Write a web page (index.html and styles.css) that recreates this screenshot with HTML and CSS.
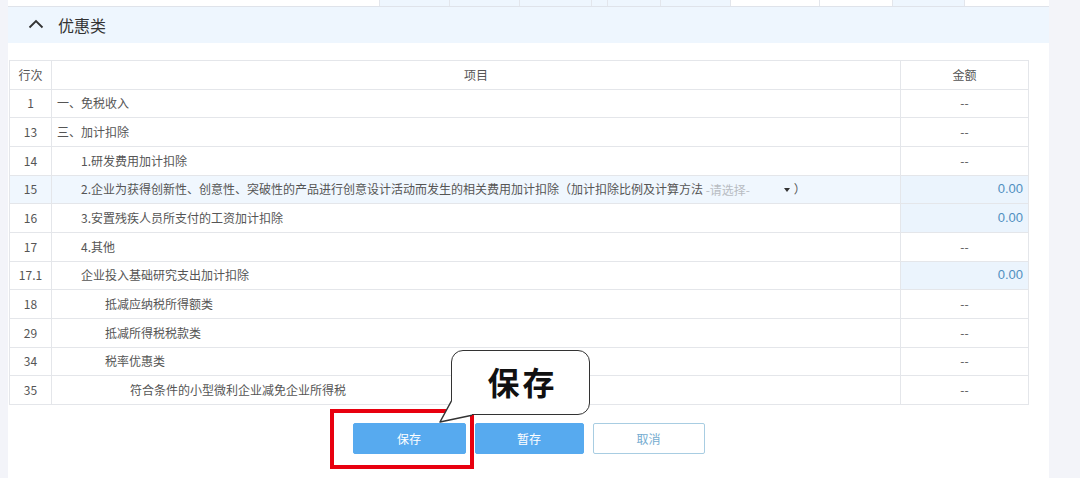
FILE: index.html
```html
<!DOCTYPE html>
<html lang="zh-CN">
<head>
    <meta charset="UTF-8">
    <meta name="viewport" content="width=device-width, initial-scale=1.0">
    <title>优惠类</title>
    <link rel="stylesheet" href="styles.css">
</head>
<body>
    <div class="panel">
        <div class="prev-row">
            <div class="cell" style="width: 89px"></div>
            <div class="cell" style="width: 283px"></div>
            <div class="cell tint" style="width: 70px"></div>
            <div class="cell tint" style="width: 70px"></div>
            <div class="cell tint" style="width: 72px"></div>
            <div class="cell tint" style="width: 16px"></div>
            <div class="cell tint" style="width: 53px"></div>
            <div class="cell tint" style="width: 70px"></div>
            <div class="cell" style="width: 89px"></div>
            <div class="cell" style="width: 73px"></div>
            <div class="cell tint" style="width: 72px"></div>
        </div>

        <div class="section-head">
            <svg class="chevron" width="16" height="10" viewBox="0 0 16 10">
                <polyline points="1.5,8.5 8,2 14.5,8.5" fill="none" stroke="#333" stroke-width="1.8"/>
            </svg>
            <span class="section-title">优惠类</span>
        </div>

        <table class="grid">
            <colgroup>
                <col class="col-no">
                <col class="col-item">
                <col class="col-amount">
            </colgroup>
            <thead>
                <tr>
                    <th>行次</th>
                    <th>项目</th>
                    <th>金额</th>
                </tr>
            </thead>
            <tbody>
                <tr>
                    <td class="no">1</td>
                    <td class="item lv0">一、免税收入</td>
                    <td class="amount">--</td>
                </tr>
                <tr>
                    <td class="no">13</td>
                    <td class="item lv0">三、加计扣除</td>
                    <td class="amount">--</td>
                </tr>
                <tr>
                    <td class="no">14</td>
                    <td class="item lv1">1.研发费用加计扣除</td>
                    <td class="amount">--</td>
                </tr>
                <tr class="picked">
                    <td class="no">15</td>
                    <td class="item lv1">2.企业为获得创新性、创意性、突破性的产品进行创意设计活动而发生的相关费用加计扣除<span class="paren">（</span>加计扣除比例及计算方法 <span class="pick"><span class="pick-text">-请选择-</span><span class="pick-caret"></span></span><span class="paren">）</span></td>
                    <td class="amount input">0.00</td>
                </tr>
                <tr>
                    <td class="no">16</td>
                    <td class="item lv1">3.安置残疾人员所支付的工资加计扣除</td>
                    <td class="amount input">0.00</td>
                </tr>
                <tr>
                    <td class="no">17</td>
                    <td class="item lv1">4.其他</td>
                    <td class="amount">--</td>
                </tr>
                <tr>
                    <td class="no">17.1</td>
                    <td class="item lv1">企业投入基础研究支出加计扣除</td>
                    <td class="amount input">0.00</td>
                </tr>
                <tr>
                    <td class="no">18</td>
                    <td class="item lv2">抵减应纳税所得额类</td>
                    <td class="amount">--</td>
                </tr>
                <tr>
                    <td class="no">29</td>
                    <td class="item lv2">抵减所得税税款类</td>
                    <td class="amount">--</td>
                </tr>
                <tr>
                    <td class="no">34</td>
                    <td class="item lv2">税率优惠类</td>
                    <td class="amount">--</td>
                </tr>
                <tr>
                    <td class="no">35</td>
                    <td class="item lv3">符合条件的小型微利企业减免企业所得税</td>
                    <td class="amount">--</td>
                </tr>
            </tbody>
        </table>

        <div class="actions">
            <button class="btn btn-save">保存</button>
            <button class="btn btn-draft">暂存</button>
            <button class="btn btn-cancel">取消</button>
        </div>

        <!-- annotation overlay -->
        <div class="mark-box"></div>
        <div class="callout">保存</div>
        <svg class="callout-tail" width="40" height="30" viewBox="0 0 40 30">
            <path d="M15,5 L4,26 L36,19 L36,5 Z" fill="#fff"/>
            <path d="M15.4,5 L4,26 L36,19.3" fill="none" stroke="#333" stroke-width="1.5" stroke-linejoin="round"/>
        </svg>
    </div>
</body>
</html>
```

FILE: styles.css
```css
body {
    margin: 0;
    background-color: #f3f4f9;
    font-family: "Noto Sans CJK SC", "Liberation Sans", sans-serif;
    font-size: 12px;
    color: #555;
}

.panel {
    position: relative;
    margin-left: 8px;
    width: 1041px;
    height: 478px;
    background-color: #fff;
}

.prev-row {
    display: flex;
    height: 6px;
    border-bottom: 1px solid #dfe3ea;
}

.cell {
    border-right: 1px solid #e3e6ec;
    box-sizing: border-box;
}

.cell:first-child {
    border-right: none;
}

.tint {
    background-color: #eef6fe;
}

.section-head {
    display: flex;
    align-items: center;
    height: 36px;
    background-color: #eef6fe;
    padding-left: 20px;
}

.chevron {
    margin-right: 14px;
    margin-top: -2px;
}

.section-title {
    font-size: 16px;
    color: #333;
}

.grid {
    margin-top: 17px;
    margin-left: 1px;
    width: 1020px;
    border-collapse: collapse;
    table-layout: fixed;
}

.col-no {
    width: 42px;
}

.col-amount {
    width: 128px;
}

.grid tr {
    height: 28.67px;
}

.grid th,
.grid td {
    border: 1px solid #e4e6ea;
    padding: 0 5px;
    font-weight: normal;
    white-space: nowrap;
    overflow: hidden;
    line-height: 16px;
}

.grid th {
    text-align: center;
    color: #555;
}

.no {
    text-align: center;
    padding: 0;
}

.item.lv0 { padding-left: 5px; }
.item.lv1 { padding-left: 29px; }
.item.lv2 { padding-left: 53px; }
.item.lv3 { padding-left: 78px; }

.paren {
    display: inline-block;
    width: 12px;
    text-align: center;
}

.amount {
    text-align: center;
}

.amount.input {
    text-align: right;
    background-color: #ebf4fd;
    color: #4f8fc0;
    font-family: "Liberation Sans", sans-serif;
    font-size: 13px;
}

.picked td {
    background-color: #f0f7fe;
}

.picked td.amount.input {
    background-color: #ebf4fd;
}

.pick {
    display: inline-flex;
    align-items: center;
    width: 88px;
    vertical-align: middle;
}

.pick-text {
    color: #b8bcc2;
    flex: 1;
}

.pick-caret {
    width: 0;
    height: 0;
    border-left: 3.5px solid transparent;
    border-right: 3.5px solid transparent;
    border-top: 4px solid #333;
    margin-right: 4px;
}

.actions {
    display: flex;
    justify-content: center;
    gap: 9px;
    margin-top: 18px;
}

.btn {
    height: 31px;
    width: 112px;
    border-radius: 2px;
    font-family: "Noto Sans CJK SC", sans-serif;
    font-size: 12px;
    cursor: pointer;
}

.btn-save {
    background-color: #57aaef;
    border: 1px solid #57aaef;
    color: #fff;
    width: 113px;
}

.btn-draft {
    background-color: #57aaef;
    border: 1px solid #57aaef;
    color: #fff;
    width: 109px;
}

.btn-cancel {
    background-color: #fff;
    border: 1px solid #a8cde2;
    color: #74abcf;
}

.mark-box {
    position: absolute;
    left: 322px;
    top: 409px;
    width: 144px;
    height: 60px;
    box-sizing: border-box;
    border: 4px solid #e8000f;
}

.callout {
    position: absolute;
    left: 443px;
    top: 350px;
    width: 139px;
    height: 65px;
    box-sizing: border-box;
    border: 1.5px solid #333;
    border-radius: 12px;
    background-color: #fff;
    display: flex;
    align-items: center;
    justify-content: center;
    font-size: 32px;
    font-weight: bold;
    letter-spacing: 3px;
    color: #111;
    padding-left: 4px;
    padding-bottom: 4px;
}

.callout-tail {
    position: absolute;
    left: 428px;
    top: 396px;
}
```
